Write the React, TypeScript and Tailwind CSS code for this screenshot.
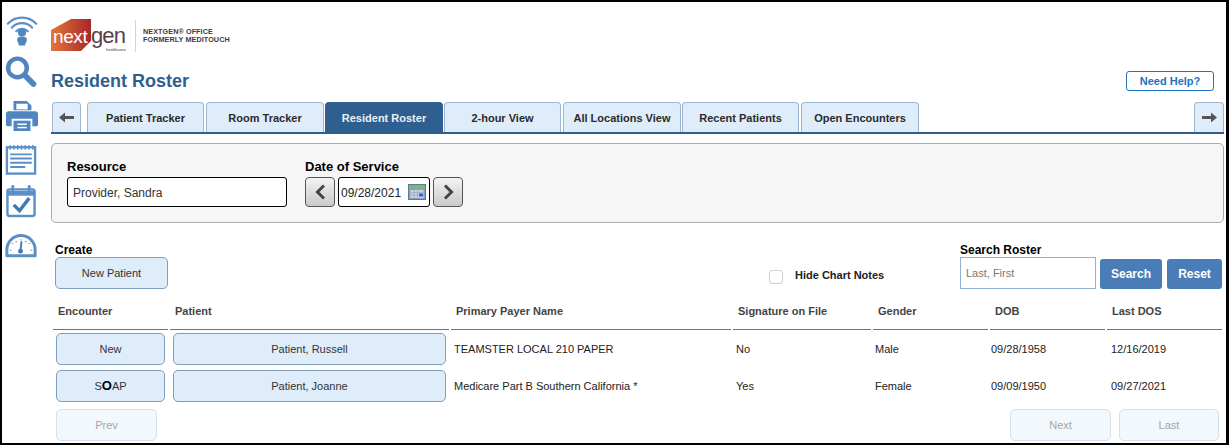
const sans = "font-['Liberation_Sans',Arial,sans-serif]";

const tabs = [
  { label: "Patient Tracker", w: "w-[117px]", mr: "mr-[2px]" },
  { label: "Room Tracker", w: "w-[118px]", mr: "mr-[1px]" },
  { label: "Resident Roster", w: "w-[118px]", mr: "mr-[1px]", active: true },
  { label: "2-hour View", w: "w-[117px]", mr: "mr-[2px]" },
  { label: "All Locations View", w: "w-[118px]", mr: "mr-[1px]" },
  { label: "Recent Patients", w: "w-[117px]", mr: "mr-[2px]" },
  { label: "Open Encounters", w: "w-[118px]", mr: "" },
];

const blueBtn =
  "flex items-center justify-center rounded-[5px] border border-[#7f9dbd] bg-[#dfedfb] text-[11px] text-[#333]";
const disabledBtn =
  "flex items-center justify-center rounded-[5px] border border-[#d5e1ec] bg-[#f3f8fc] text-[11px] text-[#a5a5a5]";

function SideIcons() {
  return (
    <div className="flex w-[49px] shrink-0 flex-col items-start pl-[3px]">
      {/* broadcast person */}
      <svg className="mt-[11px] ml-px" width="32" height="33" viewBox="0 0 36 37" fill="none" stroke="#5b8fc7" strokeLinecap="round">
        <path d="M2 12a22 22 0 0 1 32 0" strokeWidth="2.4" />
        <path d="M6.5 16.5a15.500 15.500 0 0 1 23 0" strokeWidth="2.4" />
        <path d="M11.500 20.500a9 9 0 0 1 13 0" strokeWidth="2.4" />
        <circle cx="18" cy="22" r="4.5" fill="#4f86c0" stroke="none" />
        <path d="M12.500 30c0-2.500 2-3.500 5.500-3.500s5.500 1 5.500 3.500c0 2.500-2 3.500-2 6.500h-7c0-3-2-4-2-6.500z" fill="#4f86c0" stroke="none" />
      </svg>
      {/* magnifier */}
      <svg className="mt-[10px]" width="32" height="31" viewBox="0 0 36 34" fill="none" stroke="#4f86c0">
        <circle cx="14" cy="13" r="10.500" strokeWidth="5" />
        <path d="M22 21l10 10" strokeWidth="6.500" strokeLinecap="round" />
      </svg>
      {/* printer */}
      <svg className="mt-[12px] ml-px" width="32" height="33" viewBox="0 0 34 33" fill="#4f86c0">
        <path d="M8 1h14l5 5v5H8z" />
        <rect x="11" y="4" width="12" height="6" fill="#fff" />
        <path d="M3 12h28a3 3 0 0 1 3 3v11a2 2 0 0 1-2 2h-4v-8H6v8H2a2 2 0 0 1-2-2V15a3 3 0 0 1 3-3z" />
        <path d="M8 22h18v11H8z" />
        <rect x="12" y="25" width="10" height="1.600" fill="#fff" />
        <rect x="12" y="28.500" width="10" height="1.600" fill="#fff" />
      </svg>
      {/* note page */}
      <svg className="mt-[12px]" width="32" height="31" viewBox="0 0 33 33" fill="none" stroke="#5b8fc7">
        <rect x="1.500" y="3.500" width="30" height="28" strokeWidth="2.500" />
        <path d="M5 1v5M9 1v5M13 1v5M17 1v5M21 1v5M25 1v5M29 1v5" strokeWidth="1.400" />
        <path d="M5 11h23M5 15.500h23M5 20h23M5 24.500h16" strokeWidth="2" />
      </svg>
      {/* calendar check */}
      <svg className="mt-[10px] ml-px" width="30" height="33" viewBox="0 0 31 33" fill="none" stroke="#5b8fc7">
        <rect x="1.500" y="4" width="28" height="27.500" rx="2" strokeWidth="2.500" />
        <path d="M1.500 8h28" strokeWidth="5" />
        <path d="M7 1v6M24 1v6" strokeWidth="3" strokeLinecap="round" />
        <path d="M8 20l6 6 10-13" stroke="#3f7ab8" strokeWidth="3.600" />
      </svg>
      {/* gauge */}
      <svg className="mt-[15px]" width="32" height="25" viewBox="0 0 34 25" fill="none" stroke="#5b8fc7">
        <path d="M2 23.500V17a15 15 0 0 1 30 0v6.500z" strokeWidth="3.200" strokeLinejoin="round" />
        <path d="M17 6v1M8 10v1M26 10v1M6 17v1M28 17v1M22 8v1M12 8v1" strokeWidth="1.800" />
        <path d="M17.500 8l-1 10" stroke="#3f7ab8" strokeWidth="2" />
        <circle cx="16.500" cy="18.500" r="2.600" fill="#3f7ab8" stroke="none" />
      </svg>
    </div>
  );
}

function Logo() {
  return (
    <div className="flex h-[33px] items-center">
      <svg width="82" height="33" viewBox="0 0 82 33">
        <defs>
          <linearGradient id="ng" x1="0" x2="1" y1="0" y2="0">
            <stop offset="0" stopColor="#e2783a" />
            <stop offset="1" stopColor="#a8262b" />
          </linearGradient>
        </defs>
        <path d="M0 11L20 0h20v22L30 32H0z" fill="url(#ng)" />
        <text x="2" y="24" fontFamily="Liberation Sans" fontSize="19" fill="#fff" letterSpacing="-0.4">next</text>
        <text x="40" y="24" fontFamily="Liberation Sans" fontSize="22" fill="#5b3f4a" letterSpacing="-0.9">gen</text>
        <text x="55" y="31.500" fontFamily="Liberation Sans" fontSize="4" fontWeight="700" fill="#777">healthcare</text>
      </svg>
      <div className="ml-[2px] h-[32px] w-px bg-[#d5d5d5]" />
      <div className="ml-[7px] text-[7.2px] leading-[7.5px] font-bold tracking-[0.1px] text-[#3c3c42]">
        <div>NEXTGEN® OFFICE</div>
        <div>FORMERLY MEDITOUCH</div>
      </div>
    </div>
  );
}

function ArrowH({ dir }: { dir: "left" | "right" }) {
  return (
    <svg width="15" height="11" viewBox="0 0 15 11" fill="#555">
      {dir === "left" ? <path d="M0 5.500L6 0.500v3.500h9v3H6v3.500z" /> : <path d="M15 5.500L9 0.500v3.500H0v3h9v3.500z" />}
    </svg>
  );
}

function TabBar() {
  return (
    <div className="mt-[9px] flex h-[32px] items-stretch border-b-2 border-[#2f5f8e] pl-px">
      <div className="mr-[6px] flex w-[29px] items-center justify-center rounded-t-[4px] border border-b-0 border-[#9db7d1] bg-[#dfedfb]">
        <ArrowH dir="left" />
      </div>
      {tabs.map((t) => (
        <div
          key={t.label}
          className={`${t.w} ${t.mr} flex items-center justify-center rounded-t-[4px] border border-b-0 pt-[2px] text-[11px] font-bold ${
            t.active ? "border-[#2f5f8e] bg-[#2f5f8e] text-[#e8f0f8]" : "border-[#9db7d1] bg-[#dfedfb] text-[#2b2b2b]"
          }`}
        >
          {t.label}
        </div>
      ))}
      <div className="ml-auto flex w-[30px] items-center justify-center rounded-t-[4px] border border-b-0 border-[#9db7d1] bg-[#dfedfb]">
        <ArrowH dir="right" />
      </div>
    </div>
  );
}

function Chevron({ dir }: { dir: "left" | "right" }) {
  return (
    <div className="flex h-[30px] w-[30px] items-center justify-center rounded-[4px] border border-[#555] bg-gradient-to-b from-[#f4f4f4] to-[#c9c9c9]">
      <svg width="11" height="16" viewBox="0 0 11 16" fill="none" stroke="#444" strokeWidth="3">
        {dir === "left" ? <path d="M9 1.500L2.500 8 9 14.500" /> : <path d="M2 1.500L8.500 8 2 14.500" />}
      </svg>
    </div>
  );
}

function FilterPanel() {
  return (
    <div className="mt-[9px] flex h-[80px] rounded-[5px] border border-[#a9a9a9] bg-[#f6f6f6] pt-[14px] pl-[15px] text-black">
      <div className="w-[238px]">
        <div className="text-[13px] leading-[17px] font-bold">Resource</div>
        <div className="mt-[2px] flex h-[30px] w-[220px] items-center rounded-[3px] border border-black bg-white pt-[2px] pl-[5px] text-[12px] text-[#333]">
          Provider, Sandra
        </div>
      </div>
      <div>
        <div className="text-[13px] leading-[17px] font-bold">Date of Service</div>
        <div className="mt-[2px] flex gap-[3px]">
          <Chevron dir="left" />
          <div className="flex h-[30px] w-[92px] items-center justify-between rounded-[3px] border border-black bg-white pr-[3px] pl-[2px] text-[12px] text-[#222]">
            <span className="pt-[2px]">09/28/2021</span>
            <svg width="18" height="16" viewBox="0 0 18 16">
              <rect x="0.500" y="0.500" width="17" height="15" fill="#8fa0b8" stroke="#66788f" />
              <rect x="1" y="1" width="16" height="3" fill="#6fc06a" />
              <rect x="2.500" y="6" width="13" height="8" fill="#c9d2de" />
              <path d="M2.500 8.500h13M2.500 11h13M6 6v8M9.500 6v8" stroke="#8fa0b8" strokeWidth="0.600" />
              <rect x="11" y="9.500" width="4" height="3" fill="#2f5fe0" />
            </svg>
          </div>
          <Chevron dir="right" />
        </div>
      </div>
    </div>
  );
}

function Toolbar() {
  return (
    <div className="mt-[19px] flex h-[47px] pl-[4px]">
      <div className="w-[714px]">
        <div className="-mb-[2px] text-[12px] leading-[17px] font-bold text-black">Create</div>
        <div className={`${blueBtn} h-[32px] w-[113px]`}>New Patient</div>
      </div>
      <div className="mt-[28px] flex h-[14px] w-[191px] items-center">
        <div className="h-[14px] w-[14px] rounded-[3px] border border-[#d0d0d0] bg-white" />
        <span className="mb-[3px] ml-[12px] text-[11px] font-bold text-[#222]">Hide Chart Notes</span>
      </div>
      <div>
        <div className="-mb-[2px] text-[12px] leading-[17px] font-bold text-black">Search Roster</div>
        <div className="flex">
          <input
            readOnly
            placeholder="Last, First"
            className="h-[32px] w-[136px] border border-[#8fb0d3] bg-white pl-[5px] text-[11px] placeholder:text-[#777]"
          />
          <div className="mt-[2px] ml-[4px] flex h-[30px] w-[62px] items-center justify-center rounded-[3px] bg-[#4a7db8] text-[12px] font-bold text-white">
            Search
          </div>
          <div className="mt-[2px] ml-[5px] flex h-[30px] w-[55px] items-center justify-center rounded-[3px] bg-[#4a7db8] text-[12px] font-bold text-white">
            Reset
          </div>
        </div>
      </div>
    </div>
  );
}

const columns = [
  { label: "Encounter", w: "w-[115px]" },
  { label: "Patient", w: "w-[279px]" },
  { label: "Primary Payer Name", w: "w-[280px]" },
  { label: "Signature on File", w: "w-[138px]" },
  { label: "Gender", w: "w-[115px]" },
  { label: "DOB", w: "w-[115px]" },
  { label: "Last DOS", w: "w-[115px]" },
];

const rows = [
  { enc: "New", patient: "Patient, Russell", payer: "TEAMSTER LOCAL 210 PAPER", sig: "No", gender: "Male", dob: "09/28/1958", last: "12/16/2019" },
  { enc: "SOAP", patient: "Patient, Joanne", payer: "Medicare Part B Southern California *", sig: "Yes", gender: "Female", dob: "09/09/1950", last: "09/27/2021" },
];

function Roster() {
  return (
    <div className="mt-[7px] pl-[2px]">
      <div className="flex gap-[2px]">
        {columns.map((c) => (
          <div
            key={c.label}
            className={`${c.w} h-[34px] border-b border-[#4a7db8] pt-[8px] pl-[5px] text-[11px] leading-[14px] font-bold text-[#444]`}
          >
            {c.label}
          </div>
        ))}
      </div>
      {rows.map((r, i) => (
        <div key={r.patient} className={`flex items-center text-[11px] text-[#222] ${i === 0 ? "mt-[3px]" : "mt-[5px]"}`}>
          <div className={`${blueBtn} ml-[3px] h-[32px] w-[109px]`}>
            {r.enc === "SOAP" ? (
              <span>
                S<b className="text-[13px] text-black">O</b>AP
              </span>
            ) : (
              r.enc
            )}
          </div>
          <div className={`${blueBtn} ml-[8px] h-[32px] w-[273px]`}>{r.patient}</div>
          <div className="ml-[8px] w-[282px]">{r.payer}</div>
          <div className="w-[139px]">{r.sig}</div>
          <div className="w-[116px]">{r.gender}</div>
          <div className="w-[120px]">{r.dob}</div>
          <div>{r.last}</div>
        </div>
      ))}
      <div className="mt-[7px] flex pl-[3px]">
        <div className={`${disabledBtn} h-[32px] w-[101px]`}>Prev</div>
        <div className={`${disabledBtn} ml-auto h-[32px] w-[101px]`}>Next</div>
        <div className={`${disabledBtn} mr-[5px] ml-[8px] h-[32px] w-[100px]`}>Last</div>
      </div>
    </div>
  );
}

export default function App() {
  return (
    <div className={`${sans} flex h-[445px] w-[1229px] overflow-hidden border-2 border-r-[3px] border-black bg-white`}>
      <SideIcons />
      <div className="w-[1173px] pt-[17px]">
        <Logo />
        <div className="mt-[9px] flex h-[32px] items-start justify-between">
          <h1 className="mt-[10px] text-[18px] leading-[21px] font-bold text-[#2f5f8e]">Resident Roster</h1>
          <div className="mt-[10px] mr-[10px] flex h-[20px] w-[88px] items-center justify-center rounded-[3px] border border-[#1f74c8] text-[11px] font-bold text-[#1f6fc4]">
            Need Help?
          </div>
        </div>
        <TabBar />
        <FilterPanel />
        <Toolbar />
        <Roster />
      </div>
    </div>
  );
}
